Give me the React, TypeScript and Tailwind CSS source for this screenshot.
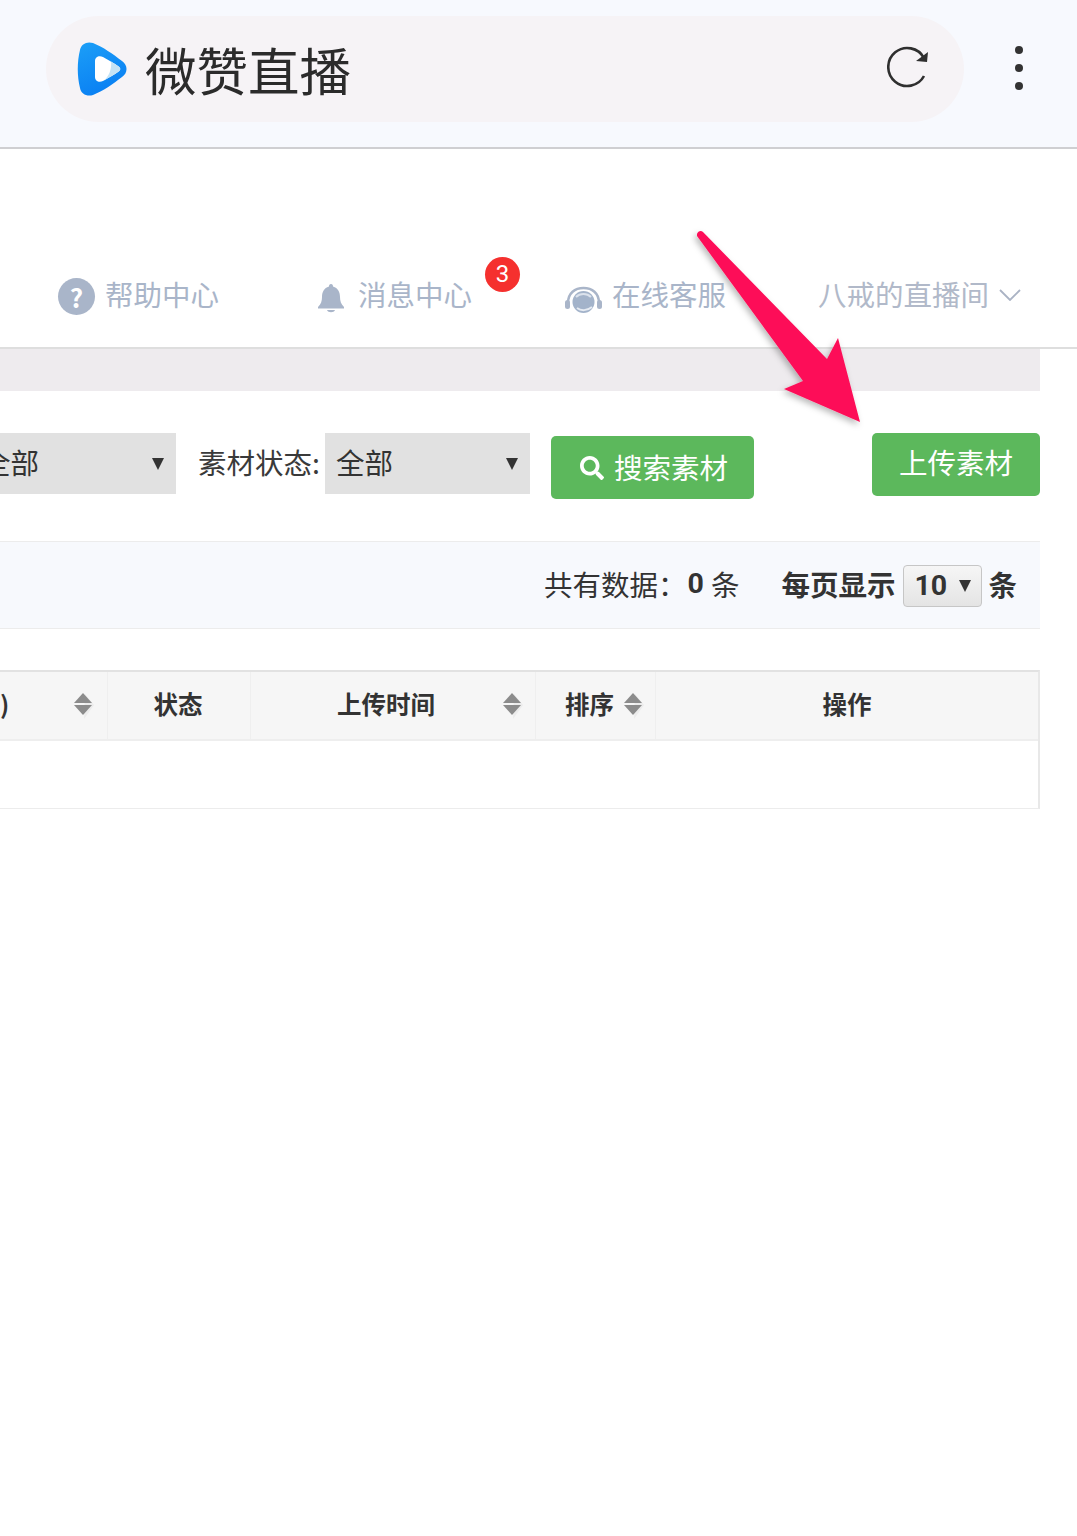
import React from "react";
import { FaSearch } from "react-icons/fa";

const font = { fontFamily: '"Noto Sans CJK SC", sans-serif' };

function Logo() {
  return (
    <svg width="50" height="54" viewBox="0 0 50 54" className="shrink-0">
      <defs>
        <linearGradient id="lg" x1="0" y1="0" x2="0.4" y2="1">
          <stop offset="0" stopColor="#1c9ff7" />
          <stop offset="1" stopColor="#0a80f3" />
        </linearGradient>
      </defs>
      <path d="M3 8C4 2 10-1 16 1C26 5 36 12 45 19C51 23 51 31 45 35C36 42 26 49 16 53C10 55 4 52 3 46C0 34 0 20 3 8Z" fill="url(#lg)" />
      <path d="M18 19C18 15 22 13 26 15C31 18 37 21 41 24C44 26 44 28 41 30C37 33 31 36 26 39C22 41 18 39 18 35Z" fill="#fff" />
      <path d="M34 19.5C36 21 39 22.5 41 24C44 26 44 28 41 30C37 33 33 35 27 38.5C32 34 35 27 34 19.5Z" fill="#c5e3f5" />
    </svg>
  );
}

function Sort() {
  return (
    <svg width="20" height="28" viewBox="0 0 20 28" className="shrink-0">
      <path d="M11 2L20 13L10 27Z" fill="#ececec" />
      <path d="M9 1L18 11H0Z" fill="#8c8c8c" />
      <path d="M0 13H18L9 23Z" fill="#8c8c8c" />
    </svg>
  );
}

function Caret({ size = 12 }: { size?: number }) {
  return (
    <svg width={size} height={size} viewBox="0 0 12 12" className="shrink-0">
      <path d="M0 0H12L6 12Z" fill="#333" />
    </svg>
  );
}

export default function App() {
  return (
    <div className="relative w-[1077px] h-[1536px] overflow-hidden bg-white text-[#333]" style={font}>
      {/* browser bar */}
      <div className="h-[149px] bg-[#f7f9fe] border-b-2 border-[#cfcfd2] flex items-start">
        <div className="mt-4 ml-[46px] w-[918px] h-[106px] rounded-[53px] bg-[#f6f3f6] flex items-center pl-[31px] pr-[33px]">
          <Logo />
          <span className="ml-[18px] text-[51.5px] leading-none text-[#2b2b2b]">微赞直播</span>
          <svg width="44" height="44" viewBox="0 0 44 44" className="ml-auto -mt-[2px]">
            <path d="M37 30A19 19 0 1 1 37 12" fill="none" stroke="#2f2f2f" strokeWidth="2.6" />
            <path d="M41 6L40 16L29 15Z" fill="#2f2f2f" />
          </svg>
        </div>
        <div className="ml-[51px] mt-[46px] flex flex-col gap-[10px]">
          <span className="w-2 h-2 rounded-full bg-[#333]" />
          <span className="w-2 h-2 rounded-full bg-[#333]" />
          <span className="w-2 h-2 rounded-full bg-[#333]" />
        </div>
      </div>

      {/* site nav */}
      <div className="h-[200px] border-b-2 border-[#dedede] pt-[125px] pl-[58px] flex items-start text-[28.5px] leading-10 text-[#a9b5c9]">
        <span className="w-[37px] h-[37px] mt-[4px] rounded-full bg-[#a9b5c9] text-white text-[26px] font-bold flex items-center justify-center">?</span>
        <span className="ml-[10px]">帮助中心</span>
        <svg width="26" height="30" viewBox="0 0 26 30" className="ml-[99px] mt-[9px]">
          <path d="M13 1C14.500 1 15 2 15 3.500C20 5 22 9 22 14C22 18 23 21 26 24V25.500H0V24C3 21 4 18 4 14C4 9 6 5 11 3.500C11 2 11.500 1 13 1Z" fill="#a9b5c9" />
          <path d="M9 27H17C16 30 10 30 9 27Z" fill="#a9b5c9" />
        </svg>
        <span className="relative ml-[14px]">
          消息中心
          <span className="absolute left-[127px] -top-[17px] w-[35px] h-[35px] rounded-full bg-[#f5302e] text-white text-[24px] leading-[35px] text-center" style={{ fontFamily: "Roboto, sans-serif" }}>3</span>
        </span>
        <svg width="37" height="30" viewBox="0 0 37 30" className="ml-[93px] mt-[9px]">
          <path d="M3 20C3 10 10 5 18.500 5C27 5 34 10 34 20" fill="none" stroke="#a9b5c9" strokeWidth="2.5" />
          <circle cx="18.500" cy="19" r="11" fill="#a3b3ca" />
          <path d="M11 14C15 10 22 10 26 14" fill="none" stroke="#dbe2ec" strokeWidth="2" />
          <path d="M12 25C16 28 22 28 27 24" fill="none" stroke="#e6ebf2" strokeWidth="2" />
          <rect x="0" y="17" width="5" height="9" rx="2.500" fill="#a9b5c9" />
          <rect x="32" y="17" width="5" height="9" rx="2.500" fill="#a9b5c9" />
        </svg>
        <span className="ml-[10px]">在线客服</span>
        <span className="ml-[92px] text-[#b1b9c9]">八戒的直播间</span>
        <svg width="22" height="12" viewBox="0 0 22 12" className="ml-[10px] mt-[15px]">
          <path d="M1 1L11 11L21 1" fill="none" stroke="#aab3c4" strokeWidth="1.800" />
        </svg>
      </div>

      <div className="w-[1040px]">
        <div className="h-[42px] bg-[#eeebee]" />

        {/* filters */}
        <div className="h-[150px] pt-[42px] flex items-start -ml-[28px] text-[28.5px] leading-none">
          <div className="w-[204px] h-[61px] bg-[#e1e1e1] flex items-center pl-[10px] pr-3 justify-between">
            <span className="-mt-[2px]">全部</span>
            <Caret />
          </div>
          <span className="ml-[22px] mt-[15px] mr-[5px] whitespace-nowrap text-[#3a3a3a]">素材状态:</span>
          <div className="w-[205px] h-[61px] bg-[#e1e1e1] flex items-center pl-[11px] pr-3 justify-between">
            <span className="-mt-[2px]">全部</span>
            <Caret />
          </div>
          <button className="ml-[21px] mt-[3px] w-[203px] h-[63px] rounded-[5px] bg-[#5cb85c] text-white flex items-center pl-[29px]">
            <FaSearch size={24} />
            <span className="ml-[10px]">搜索素材</span>
          </button>
          <button className="ml-auto w-[168px] h-[63px] rounded-[5px] bg-[#5cb85c] text-white flex items-center justify-center">
            <span className="-mt-[4px]">上传素材</span>
          </button>
        </div>

        {/* stats */}
        <div className="h-[88px] bg-[#f7f9fd] border-y border-[#ececec] flex items-center justify-end pr-[23px] text-[28.5px] leading-none">
          <span className="-mt-[2px]">共有数据：</span>
          <b className="ml-[1px] -mt-[2px] font-bold" style={{ fontFamily: "Roboto, sans-serif" }}>0</b>
          <span className="ml-[7px] -mt-[2px]">条</span>
          <b className="ml-[42px] -mt-[2px] font-bold">每页显示</b>
          <div className="ml-[8px] mt-[2px] w-[79px] h-[42px] rounded-sm border border-[#c6c6c6] bg-gradient-to-b from-[#f6f6f6] to-[#e4e4e4] flex items-center pl-[10px] gap-[12px]">
            <b className="font-bold" style={{ fontFamily: "Roboto, sans-serif" }}>10</b>
            <Caret size={12} />
          </div>
          <b className="ml-[6px] -mt-[2px] font-bold">条</b>
        </div>

        {/* table */}
        <div className="mt-[41px] border-t-2 border-r-2 border-b border-t-[#e2e2e2] border-r-[#e8e8e8] border-b-[#ececec]">
          <div className="h-[69px] bg-[#f6f6f6] border-b-2 border-[#eeeeee] flex text-[24.5px] font-bold leading-none">
            <div className="w-[108px] border-r border-[#efefef] flex items-center pr-[13px]">
              <span className="-mt-[3px]">)</span>
              <span className="ml-auto"><Sort /></span>
            </div>
            <div className="w-[143px] border-r border-[#efefef] flex items-center justify-center">
              <span className="-mt-[3px] -ml-[2px]">状态</span>
            </div>
            <div className="w-[285px] border-r border-[#efefef] flex items-center pl-[86px] pr-[12px]">
              <span className="-mt-[3px]">上传时间</span>
              <span className="ml-auto"><Sort /></span>
            </div>
            <div className="w-[120px] border-r border-[#efefef] flex items-center pl-[29px]">
              <span className="-mt-[3px]">排序</span>
              <span className="ml-[10px]"><Sort /></span>
            </div>
            <div className="flex-1 flex items-center justify-center">
              <span className="-mt-[3px]">操作</span>
            </div>
          </div>
          <div className="h-[67px] bg-white" />
        </div>
      </div>

      {/* annotation arrow */}
      <svg width="190" height="210" viewBox="0 0 190 210" className="absolute left-[690px] top-[225px] pointer-events-none">
        <defs>
          <filter id="sh" x="-20%" y="-20%" width="140%" height="140%">
            <feDropShadow dx="-2" dy="3" stdDeviation="3" floodColor="#000" floodOpacity="0.28" />
          </filter>
        </defs>
        <path d="M7 9C8 6 11 5 13 7L137 134L148 113L170 197L94 164L113 156L7 11Z" fill="#fd1158" filter="url(#sh)" />
      </svg>
    </div>
  );
}
